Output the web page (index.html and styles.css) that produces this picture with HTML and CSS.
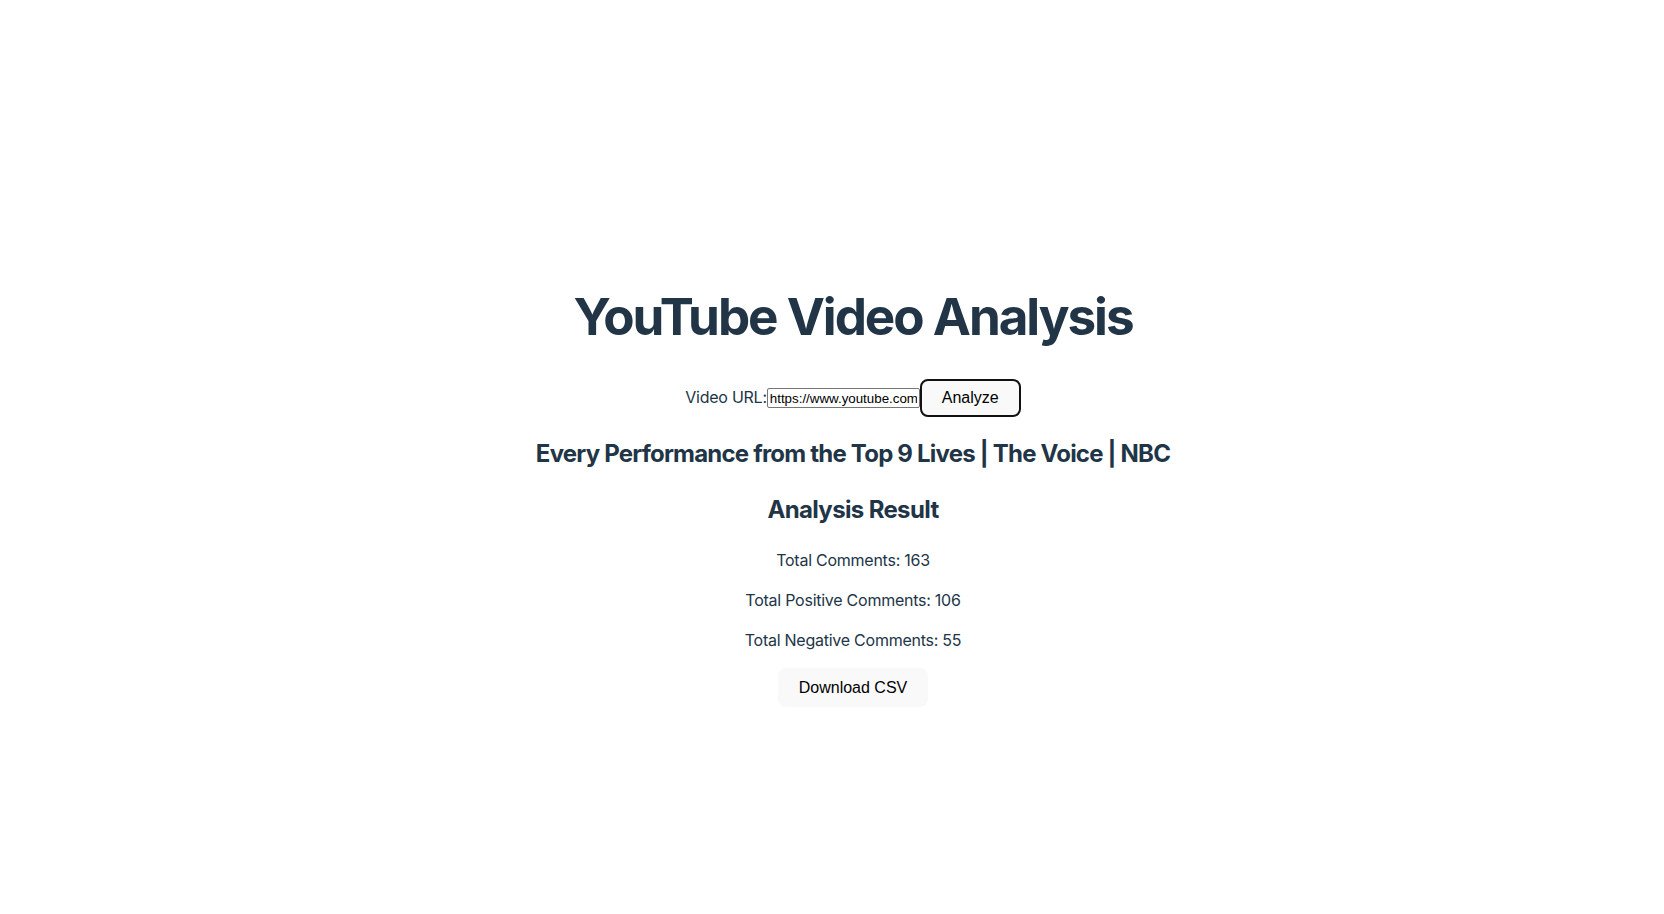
FILE: index.html
```html
<!DOCTYPE html>
<html lang="en">
<head>
<meta charset="UTF-8">
<title>YouTube Video Analysis</title>
<link rel="stylesheet" href="styles.css">
</head>
<body>
<div class="root">
  <div class="app">
    <h1 class="title">YouTube Video Analysis</h1>
    <form class="url-form">
      <label class="url-label" for="url">Video URL:</label><input class="url-input" id="url" type="text" value="https://www.youtube.com/watch?v=abc"><button class="btn btn-focus" type="button">Analyze</button>
    </form>
    <h2 class="video-title">Every Performance from the Top 9 Lives | The Voice | NBC</h2>
    <h2 class="result-title">Analysis Result</h2>
    <p class="stat">Total Comments: 163</p>
    <p class="stat">Total Positive Comments: 106</p>
    <p class="stat">Total Negative Comments: 55</p>
    <button class="btn" type="button">Download CSV</button>
  </div>
</div>
</body>
</html>
```
FILE: styles.css
```css
:root {
  font-family: Inter, system-ui, Avenir, Helvetica, Arial, sans-serif;
  line-height: 1.5;
  font-weight: 400;
  color: #213547;
  background-color: #ffffff;
}
body {
  margin: 0;
  display: flex;
  place-items: center;
  min-width: 320px;
  min-height: 100vh;
}
.root {
  max-width: 1280px;
  margin: 0 auto;
  padding: 79px 32px 32px 74px;
  text-align: center;
  letter-spacing: -0.25px;
}
.title {
  font-size: 3.2em;
  line-height: 1.1;
  margin: 0.67em 0;
  letter-spacing: -0.04em;
}
.url-form {
  display: block;
}
.url-input {
  box-sizing: border-box;
  font-family: Arial, "Liberation Sans", sans-serif;
  font-size: 13.333px;
  letter-spacing: normal;
  width: 153px;
  height: 20px;
  padding: 1px 2px;
  border: 1px solid #767676;
  border-radius: 2px;
  color: #000;
  background: #fff;
}
.btn {
  border-radius: 8px;
  border: 1px solid transparent;
  padding: 9.6px 20px;
  font-size: 16px;
  font-weight: 400;
  line-height: normal;
  letter-spacing: normal;
  font-family: Arial, "Liberation Sans", sans-serif;
  background-color: #f9f9f9;
  color: #000;
  cursor: pointer;
}
.btn-focus {
  border: 2px solid #111;
  padding: 8px 20px;
}
.video-title,
.result-title {
  font-size: 1.5em;
  line-height: 1.5;
  margin: 0.83em 0;
  letter-spacing: -0.033em;
}
.result-title {
  letter-spacing: -0.027em;
}
.stat {
  margin: 1em 0;
}
```
